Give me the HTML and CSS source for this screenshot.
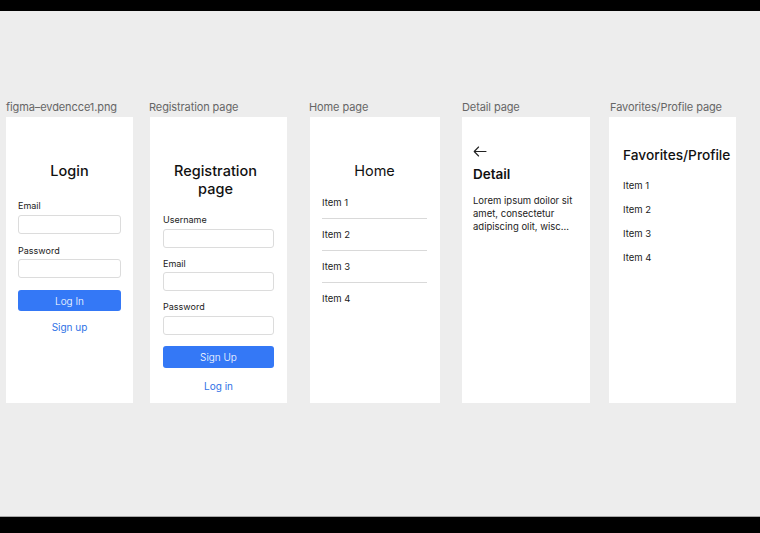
FILE: index.html
```html
<!DOCTYPE html>
<html>
<head>
<meta charset="utf-8">
<link rel="stylesheet" href="styles.css">
</head>
<body>
<div class="frame">
  <div class="bar-top"></div>
  <div class="canvas">
    <div class="col col-1">
      <div class="col-label">figma–evdencce1.png</div>
      <div class="card card-login">
        <h1 class="title">Login</h1>
        <div class="field">
          <div class="field-label">Email</div>
          <div class="input"></div>
        </div>
        <div class="field">
          <div class="field-label">Password</div>
          <div class="input"></div>
        </div>
        <div class="btn">Log In</div>
        <div class="link">Sign up</div>
      </div>
    </div>

    <div class="col col-2">
      <div class="col-label">Registration page</div>
      <div class="card card-reg">
        <h1 class="title title-reg"><span class="title-line">Registration</span><span class="title-line">page</span></h1>
        <div class="field">
          <div class="field-label">Username</div>
          <div class="input"></div>
        </div>
        <div class="field">
          <div class="field-label">Email</div>
          <div class="input"></div>
        </div>
        <div class="field">
          <div class="field-label">Password</div>
          <div class="input"></div>
        </div>
        <div class="btn btn-reg">Sign Up</div>
        <div class="link link-reg">Log in</div>
      </div>
    </div>

    <div class="col col-3">
      <div class="col-label">Home page</div>
      <div class="card card-home">
        <h1 class="title">Home</h1>
        <ul class="list">
          <li>Item 1</li>
          <li>Item 2</li>
          <li>Item 3</li>
          <li>Item 4</li>
        </ul>
      </div>
    </div>

    <div class="col col-4">
      <div class="col-label">Detail page</div>
      <div class="card card-detail">
        <svg class="back" width="14" height="11" viewBox="0 0 14 11" fill="none" stroke="#222" stroke-width="1.1" stroke-linecap="round" stroke-linejoin="round">
          <path d="M13 5.5H1.2M5.6 1L1.2 5.5L5.6 10"/>
        </svg>
        <h2 class="detail-title">Detail</h2>
        <p class="lorem">Lorem ipsum doilor sit amet, consectetur adipiscing olit, wisc...</p>
      </div>
    </div>

    <div class="col col-5">
      <div class="col-label">Favorites/Profile page</div>
      <div class="card card-fav">
        <h2 class="fav-title">Favorites/Profile</h2>
        <ul class="fav-list">
          <li>Item 1</li>
          <li>Item 2</li>
          <li>Item 3</li>
          <li>Item 4</li>
        </ul>
      </div>
    </div>
  </div>
  <div class="bar-bottom"></div>
</div>
</body>
</html>
```

FILE: styles.css
```css
* { box-sizing: border-box; }
html, body {
  margin: 0;
  padding: 0;
  background: #000;
  font-family: Inter, "Noto Sans", "Liberation Sans", sans-serif;
}
.frame {
  width: 760px;
  height: 533px;
  display: flex;
  flex-direction: column;
}
.bar-top { height: 11px; background: #000; }
.bar-bottom { height: 16px; background: #000; }
.canvas {
  height: 506px;
  background: #ededed;
  border-bottom: 1px solid #a9a9a9;
  display: flex;
  align-items: flex-start;
  padding: 89px 0 0 6px;
}
.col { display: flex; flex-direction: column; }
.col-1 { width: 127px; }
.col-2 { width: 137px; margin-left: 17px; }
.col-3 { width: 130px; margin-left: 23px; }
.col-4 { width: 128px; margin-left: 22px; }
.col-5 { width: 127px; margin-left: 19px; }
.col-label {
  font-size: 11px;
  line-height: 14px;
  height: 17px;
  color: #666;
  font-weight: 400;
  white-space: nowrap;
  letter-spacing: -0.1px;
}
.col-2 .col-label { margin-left: -1px; }
.col-3 .col-label { margin-left: -1px; }
.col-5 .col-label { margin-left: 1px; }
.card {
  background: #fff;
  height: 286px;
  display: flex;
  flex-direction: column;
  color: #111;
}
.card-login { padding: 44px 12px 0 12px; }
.card-reg { padding: 45px 13px 0 13px; }
.card-home { padding: 44px 13px 0 12px; }
.card-detail { padding: 29px 12px 0 11px; }
.card-fav { padding: 29px 6px 0 14px; }

.title {
  margin: 0;
  font-size: 14.5px;
  line-height: 20px;
  font-weight: 500;
  text-align: center;
  color: #111;
}
.title-reg {
  line-height: 18px;
  display: flex;
  flex-direction: column;
  align-items: center;
  margin-right: 6px;
}
.title-line { display: block; height: 18px; }
.card-home .title { font-weight: 400; font-size: 14.5px; }

.field { display: flex; flex-direction: column; }
.field-label {
  font-size: 9px;
  line-height: 12px;
  color: #222;
  margin-bottom: 2.5px;
}
.input {
  height: 19px;
  border: 1px solid #dcdcdc;
  border-radius: 3px;
  background: #fff;
}
.card-login .field:nth-of-type(1) { margin-top: 19px; }
.card-login .field + .field { margin-top: 11px; }
.card-reg .field:nth-of-type(1) { margin-top: 16px; }
.card-reg .field + .field { margin-top: 10px; }

.btn {
  margin-top: 12px;
  height: 21px;
  border-radius: 3px;
  background: #3478f6;
  color: #fff;
  font-size: 10px;
  font-weight: 300;
  display: flex;
  align-items: center;
  justify-content: center;
}
.btn-reg { margin-top: 11px; height: 22px; }
.link {
  margin-top: 10px;
  text-align: center;
  font-size: 10px;
  line-height: 13px;
  color: #2f72e6;
}
.link-reg { margin-top: 12px; }

.list {
  list-style: none;
  margin: 6px 0 0 0;
  padding: 0;
}
.list li {
  font-size: 9.5px;
  line-height: 13px;
  padding: 9px 0;
  border-bottom: 1px solid #d9d9d9;
  color: #222;
}
.list li:last-child { border-bottom: none; }

.back { display: block; }
.detail-title {
  margin: 8px 0 0 0;
  font-size: 13.5px;
  line-height: 18px;
  font-weight: 600;
  color: #111;
}
.lorem {
  margin: 11px 0 0 0;
  width: 104px;
  font-size: 9.5px;
  line-height: 13px;
  color: #222;
}

.fav-title {
  margin: 0;
  font-size: 13.7px;
  line-height: 18px;
  font-weight: 500;
  white-space: nowrap;
  color: #111;
}
.fav-list {
  list-style: none;
  margin: 10px 0 0 0;
  padding: 0;
}
.fav-list li {
  font-size: 9.5px;
  line-height: 24px;
  color: #222;
}
```
